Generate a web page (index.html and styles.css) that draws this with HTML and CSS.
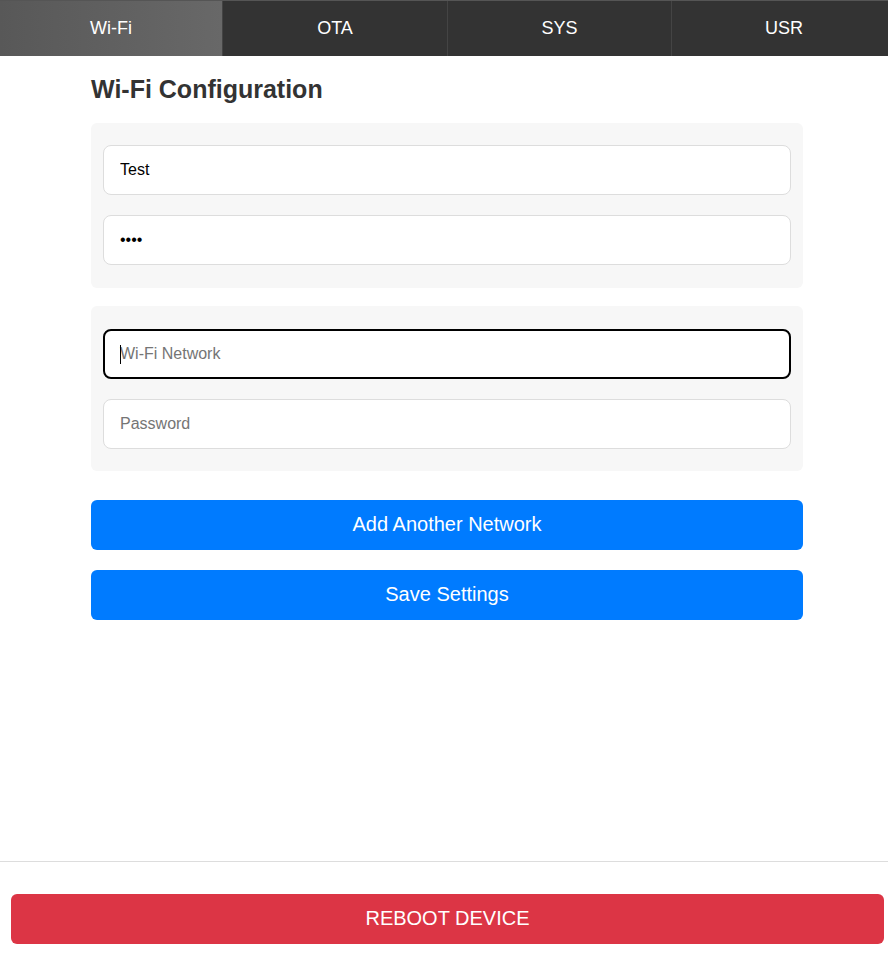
FILE: index.html
```html
<!DOCTYPE html>
<html lang="en">
<head>
<meta charset="utf-8">
<title>Wi-Fi Configuration</title>
<link rel="stylesheet" href="styles.css">
</head>
<body>
<div class="page">
  <nav class="tabs">
    <div class="tab tab-wifi active">Wi-Fi</div>
    <div class="tab tab-ota">OTA</div>
    <div class="tab tab-sys">SYS</div>
    <div class="tab tab-usr">USR</div>
  </nav>
  <main class="content">
    <h2 class="title">Wi-Fi Configuration</h2>
    <div class="card">
      <input class="field" type="text" value="Test">
      <input class="field" type="password" value="test">
    </div>
    <div class="card card-new">
      <div class="field focused"><span class="caret"></span><span class="ph">Wi-Fi Network</span></div>
      <input class="field" type="password" placeholder="Password">
    </div>
    <button class="btn btn-add">Add Another Network</button>
    <button class="btn btn-save">Save Settings</button>
  </main>
  <footer class="footer">
    <button class="btn btn-reboot">REBOOT DEVICE</button>
  </footer>
</div>
</body>
</html>
```

FILE: styles.css
```css
html, body {
  margin: 0;
  padding: 0;
  background: #fff;
  overflow: hidden;
}
body {
  font-family: "Liberation Sans", Arial, sans-serif;
}
.page {
  height: 961px;
  display: flex;
  flex-direction: column;
}
.tabs {
  display: flex;
  width: 896px;
  height: 55px;
  border-top: 1px solid #555;
  background: #333;
  flex-shrink: 0;
}
.tab {
  box-sizing: border-box;
  display: flex;
  align-items: center;
  justify-content: center;
  color: #fff;
  font-size: 18px;
  background: #333;
  border-right: 1px solid #444;
  padding-bottom: 1px;
}
.tab-wifi { width: 223px; }
.tab-ota { width: 225px; }
.tab-sys { width: 224px; }
.tab-usr { width: 224px; border-right: none; }
.tab.active {
  background: linear-gradient(to right, #585858, #686868);
}
.content {
  flex: 1;
  margin-left: 91px;
  width: 712px;
  display: flex;
  flex-direction: column;
}
.title {
  margin: 19px 0 20px;
  font-size: 25px;
  font-weight: bold;
  color: #333;
  line-height: 28px;
}
.card {
  background: #f7f7f7;
  border-radius: 6px;
  padding: 22px 12px 23px;
  display: flex;
  flex-direction: column;
  gap: 20px;
  margin-bottom: 18px;
}
.card-new {
  padding: 23px 12px 22px;
}
.field {
  box-sizing: border-box;
  height: 50px;
  width: 100%;
  border: 1px solid #ddd;
  border-radius: 8px;
  background: #fff;
  padding: 0 16px;
  font-family: "Liberation Sans", Arial, sans-serif;
  font-size: 16px;
  color: #000;
  outline: none;
  margin: 0;
}
.field::placeholder {
  color: #757575;
}
.field.focused {
  border: 2px solid #000;
  padding: 0 15px;
  display: flex;
  align-items: center;
  position: relative;
}
.ph {
  color: #757575;
}
.caret {
  position: absolute;
  left: 15px;
  top: 14px;
  width: 1px;
  height: 19px;
  background: #000;
}
.btn {
  box-sizing: border-box;
  border: none;
  border-radius: 6px;
  height: 50px;
  width: 100%;
  color: #fff;
  font-family: "Liberation Sans", Arial, sans-serif;
  font-size: 20px;
  line-height: 48px;
  cursor: pointer;
  padding: 0 0 2px;
}
.btn-add {
  background: #007bff;
  margin-top: 11px;
}
.btn-save {
  background: #007bff;
  margin-top: 20px;
}
.footer {
  border-top: 1px solid #ddd;
  padding: 32px 4px 17px 11px;
  flex-shrink: 0;
}
.btn-reboot {
  background: #dc3545;
  width: 873px;
}
```
